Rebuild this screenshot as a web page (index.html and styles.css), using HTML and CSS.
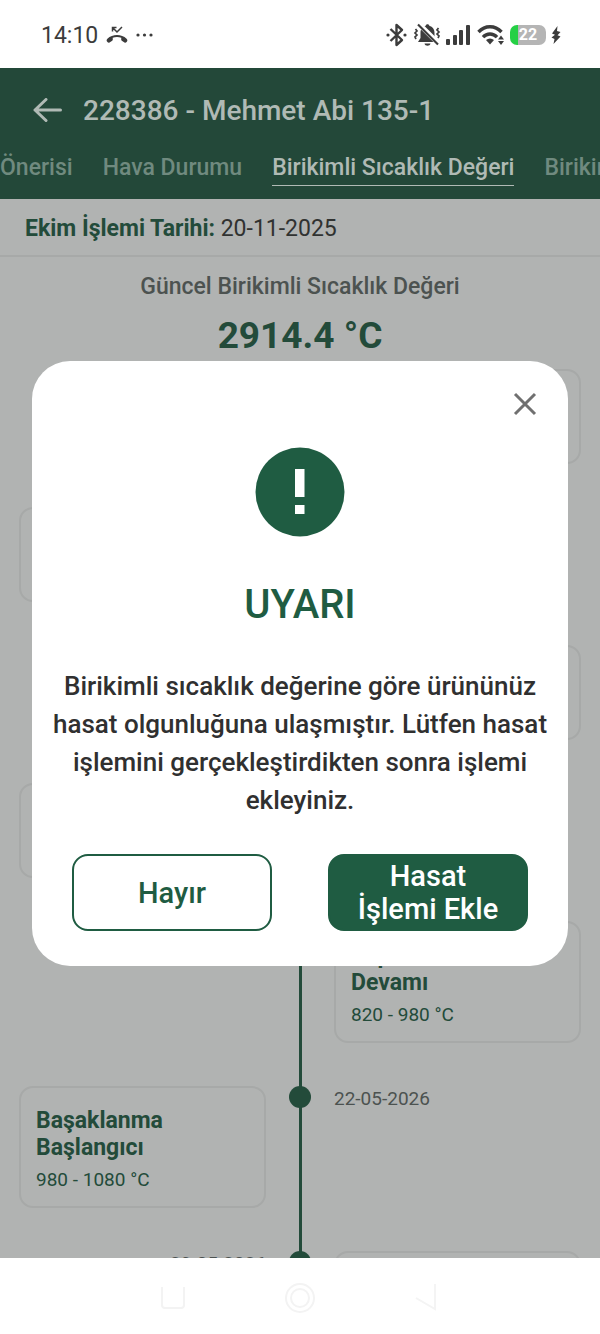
FILE: index.html
```html
<!DOCTYPE html>
<html lang="tr">
<head>
<meta charset="utf-8">
<meta name="viewport" content="width=device-width, initial-scale=1">
<title>228386 - Mehmet Abi 135-1</title>
<link rel="stylesheet" href="styles.css">
</head>
<body>
<div class="phone">
  <div class="status">
    <div class="status-group">
      <span class="clock">14:10</span>
      <svg class="missed" width="22" height="18" viewBox="0 0 22 18" aria-hidden="true"><path d="M1 15.500c-.7-1-.4-2 .4-2.800C6.500 7.800 15.500 7.800 20.600 12.700c.8.800 1.100 1.800.4 2.800l-.7.800c-.5.600-1.200.6-1.800.2l-2.700-1.700c-.5-.4-.7-.9-.6-1.500l.1-1.500c-2.700-1-5.900-1-8.600 0l.1 1.500c.1.600-.1 1.100-.6 1.500l-2.700 1.700c-.6.400-1.300.4-1.800-.2z" fill="#3c3c3c"/><path d="M6.500 5.500V1.500h4M6.500 1.500l4.500 4.500 5-5" fill="none" stroke="#3c3c3c" stroke-width="1.500"/></svg>
      <svg width="18" height="4" viewBox="0 0 18 4" aria-hidden="true" fill="#3c3c3c"><circle cx="2" cy="2" r="1.600"/><circle cx="8.500" cy="2" r="1.600"/><circle cx="15" cy="2" r="1.600"/></svg>
    </div>
    <div class="status-icons">
      <svg width="22" height="24" viewBox="0 0 22 24" aria-hidden="true"><path d="M4.500 6l11.500 11L10.500 22V2L16 7 4.500 18" fill="none" stroke="#3c3c3c" stroke-width="2.400" stroke-linejoin="round"/><circle cx="2" cy="12" r="1.600" fill="#3c3c3c"/><circle cx="19" cy="12" r="1.600" fill="#3c3c3c"/></svg>
      <svg width="28" height="24" viewBox="0 0 28 24" aria-hidden="true"><path d="M5 19l2.500-4v-5C7.500 6 9.500 3.500 12.500 3c.5-2.500 3.500-2.500 4 0 3 .5 5 3 5 7v5l2.500 4zM11.500 20.500h6c-.5 3-5.500 3-6 0z" fill="#3c3c3c"/><path d="M6 1l20 20" stroke="#fff" stroke-width="5"/><path d="M5 1.500l20 20" stroke="#3c3c3c" stroke-width="2.200"/><path d="M2.500 6l1.500 2-2 2 2 2-2 2 1 2M25.500 5l-1.500 2 2 2-2 2 2 2-1 2" fill="none" stroke="#3c3c3c" stroke-width="1.700"/></svg>
      <svg width="26" height="20" viewBox="0 0 26 20" aria-hidden="true" fill="#3c3c3c"><rect x="0" y="14" width="4" height="6" rx="1"/><rect x="7" y="10" width="4" height="10" rx="1"/><rect x="13" y="5" width="4" height="15" rx="1"/><rect x="20" y="0" width="4" height="20" rx="1"/></svg>
      <svg width="28" height="22" viewBox="0 0 28 22" aria-hidden="true"><path d="M1.500 8C8 1 18 1 24.500 8M6 13.200c4-4.200 10-4.200 14 0" fill="none" stroke="#3c3c3c" stroke-width="3.400"/><path d="M9 16c2.500-2 5.500-2 8 0l-4 4.500z" fill="#3c3c3c"/><path d="M21 15.500l3-4 3 4zM21 17h6l-3 4z" fill="#3c3c3c"/></svg>
      <div class="battery"><span>22</span></div>
      <svg width="10" height="20" viewBox="0 0 10 20" aria-hidden="true"><path d="M6.500 1L1 8.500l3 1.200L.5 12.500 3.500 14l-1 5L9.500 11.500l-3-1.300L9.500 7 6 6z" fill="#3c3c3c"/></svg>
    </div>
  </div>

  <div class="app">
    <header class="header">
      <div class="title-row">
        <button class="icon-button" type="button" aria-label="Geri"><svg width="30" height="26" viewBox="0 0 30 26"><path d="M28.500 12H3M14 1.500L3 12l11 10.500" fill="none" stroke="#b0bab5" stroke-width="3" stroke-linecap="round" stroke-linejoin="round"/></svg></button>
        <h1 class="title">228386 - Mehmet Abi 135-1</h1>
      </div>
      <nav class="tabs">
        <a class="tab" href="#oneri">Önerisi</a>
        <a class="tab" href="#hava">Hava Durumu</a>
        <a class="tab active" href="#sicaklik">Birikimli Sıcaklık Değeri</a>
        <a class="tab" href="#birikim">Birikim</a>
      </nav>
    </header>
    <p class="sowing"><strong>Ekim İşlemi Tarihi:</strong> 20-11-2025</p>
    <section class="current">
      <h2 class="current-label">Güncel Birikimli Sıcaklık Değeri</h2>
      <p class="current-value">2914.4 °C</p>
    </section>
    <div class="timeline">
      <div class="row right"><span class="dot"></span><article class="card"></article></div>
      <div class="row left"><article class="card"></article><span class="dot"></span></div>
      <div class="row right"><span class="dot"></span><article class="card"></article></div>
      <div class="row left"><article class="card"></article><span class="dot"></span></div>
      <div class="row right"><span class="dot"></span><article class="card"><h3>Sapa Kalkma Devamı</h3><p>820 - 980 °C</p></article></div>
      <div class="row left"><article class="card"><h3>Başaklanma Başlangıcı</h3><p>980 - 1080 °C</p></article><span class="dot"></span><time>22-05-2026</time></div>
      <div class="row right"><time>29-05-2026</time><span class="dot"></span><article class="card"></article></div>
    </div>

    <div class="backdrop">
      <div class="dialog" role="dialog" aria-modal="true" aria-labelledby="dialog-title">
        <button class="icon-button close" type="button" aria-label="Kapat"><svg width="24" height="24" viewBox="0 0 24 24"><path d="M2 2l20 20M22 2L2 22" stroke="#707070" stroke-width="3"/></svg></button>
        <svg class="alert" width="90" height="90" viewBox="0 0 90 90" aria-hidden="true"><circle cx="45" cy="45" r="44.500" fill="#1f5c42"/><path d="M40 22h9.500v28H40zM40 58h9.500v9H40z" fill="#fff"/></svg>
        <h2 class="dialog-title" id="dialog-title">UYARI</h2>
        <p class="message">Birikimli sıcaklık değerine göre ürününüz hasat olgunluğuna ulaşmıştır. Lütfen hasat işlemini gerçekleştirdikten sonra işlemi ekleyiniz.</p>
        <div class="actions">
          <button class="button outline" type="button">Hayır</button>
          <button class="button solid" type="button">Hasat İşlemi Ekle</button>
        </div>
      </div>
    </div>
  </div>

  <div class="navbar">
    <svg width="28" height="32" viewBox="0 0 28 32" aria-hidden="true"><path d="M3 5v18q0 3 3 3h16q3 0 3-3V5" fill="none" stroke="#f3f3f3" stroke-width="2"/></svg>
    <svg width="32" height="32" viewBox="0 0 32 32" aria-hidden="true" fill="none" stroke="#f3f3f3" stroke-width="2"><circle cx="16" cy="16" r="14"/><circle cx="16" cy="16" r="9"/></svg>
    <svg width="28" height="32" viewBox="0 0 28 32" aria-hidden="true"><path d="M3 16l19 11V2" fill="none" stroke="#f4f4f4" stroke-width="2"/></svg>
  </div>
</div>
</body>
</html>
```

FILE: styles.css
```css
* { box-sizing: border-box; }

body,
h1, h2, h3, p {
  margin: 0;
}

body {
  font-family: Roboto, "Noto Sans", sans-serif;
  background: #fff;
}

button {
  font-family: inherit;
  cursor: pointer;
}

.phone {
  display: flex;
  flex-direction: column;
  height: 100vh;
  overflow: hidden;
}

/* System status bar */
.status {
  flex: none;
  display: flex;
  justify-content: space-between;
  align-items: center;
  height: 68px;
  padding: 2px 39px 0 41px;
  color: #3c3c3c;
}

.status-group {
  display: flex;
  align-items: center;
  gap: 8px;
}

.clock { font-size: 23px; }

.status-icons {
  display: flex;
  align-items: center;
  gap: 5px;
}

.battery {
  width: 36px;
  height: 20px;
  border-radius: 7px;
  background: linear-gradient(to right, #25d045 8px, #b5b5b5 8px);
  color: #fff;
  font-size: 16px;
  font-weight: 700;
  line-height: 20px;
  text-align: center;
}

/* Application */
.app {
  position: relative;
  flex: 1;
  min-height: 0;
  overflow: hidden;
  background: #b1b3b2;
}

.header {
  height: 131px;
  background: #234839;
  overflow: hidden;
}

.icon-button {
  display: flex;
  padding: 0;
  border: 0;
  background: none;
}

.title-row {
  display: flex;
  align-items: center;
  gap: 21px;
  height: 85px;
  padding-left: 32px;
}

.title {
  font-size: 28px;
  font-weight: 500;
  color: #b0bab5;
}

.tabs {
  display: flex;
  gap: 30px;
  white-space: nowrap;
}

.tab {
  height: 33px;
  font-size: 23px;
  font-weight: 500;
  line-height: 30px;
  color: #708a7f;
  text-decoration: none;
}

.tab.active {
  color: #b0bab5;
  border-bottom: 1px solid #b0bab5;
}

.sowing {
  height: 58px;
  padding-left: 25px;
  border-bottom: 2px solid #a7a9a8;
  font-size: 23px;
  line-height: 60px;
  color: #303231;
}

.sowing strong {
  font-weight: 700;
  color: #234b3a;
}

.current {
  height: 112px;
  padding-top: 14px;
  text-align: center;
}

.current-label {
  font-size: 23px;
  font-weight: 500;
  line-height: 32px;
  color: #4c5250;
}

.current-value {
  margin-top: 8px;
  font-size: 37px;
  font-weight: 700;
  line-height: 50px;
  color: #234b3a;
}

/* Growth stages along a central line */
.timeline {
  display: flex;
  flex-direction: column;
  gap: 43px;
  padding: 0 19px;
  background: linear-gradient(#234b3a, #234b3a) center / 3px 100% no-repeat;
}

.row {
  display: grid;
  grid-template-columns: 1fr 22px 1fr;
  column-gap: 23px;
  align-items: start;
}

.dot {
  grid-column: 2;
  grid-row: 1;
  width: 22px;
  height: 22px;
  border-radius: 50%;
  background: #234b3a;
}

.card {
  min-height: 95px;
  padding: 19px 15px 13px;
  border: 2px solid #a7a9a8;
  border-radius: 14px;
  color: #234b3a;
}

.left .card,
.right time {
  grid-column: 1;
  grid-row: 1;
}

.right .card,
.left time {
  grid-column: 3;
  grid-row: 1;
}

.right time { text-align: right; }

.card h3 {
  max-width: 150px;
  font-size: 23px;
  font-weight: 700;
  line-height: 27px;
}

.card p {
  margin-top: 6px;
  font-size: 19px;
  line-height: 26px;
}

time {
  font-size: 19px;
  line-height: 26px;
  color: #4c5250;
}

/* Warning dialog */
.backdrop {
  position: absolute;
  inset: 0;
  display: flex;
  align-items: center;
  justify-content: center;
  padding: 0 32px;
}

.dialog {
  display: flex;
  flex-direction: column;
  align-items: center;
  width: 100%;
  padding: 31px 16px 35px;
  border-radius: 38px;
  background: #fff;
}

.close {
  align-self: flex-end;
  margin-right: 15px;
}

.alert { margin-top: 31px; }

.dialog-title {
  margin-top: 40px;
  font-size: 40px;
  font-weight: 500;
  line-height: 56px;
  color: #1f5c42;
}

.message {
  margin-top: 34px;
  font-size: 26px;
  font-weight: 500;
  line-height: 38px;
  text-align: center;
  color: #303030;
}

.actions {
  display: flex;
  justify-content: space-between;
  gap: 56px;
  width: 100%;
  margin-top: 35px;
  padding: 0 24px;
}

.button {
  flex: 1;
  height: 77px;
  padding: 2px 20px 0;
  border: 2px solid #1f5c42;
  border-radius: 16px;
  font-size: 29px;
  font-weight: 500;
  line-height: 33px;
}

.outline {
  background: #fff;
  color: #1f5c42;
}

.solid {
  background: #1f5c42;
  color: #fff;
}

/* System navigation */
.navbar {
  flex: none;
  display: flex;
  justify-content: center;
  align-items: center;
  gap: 97px;
  height: 76px;
  padding-top: 4px;
}
```
